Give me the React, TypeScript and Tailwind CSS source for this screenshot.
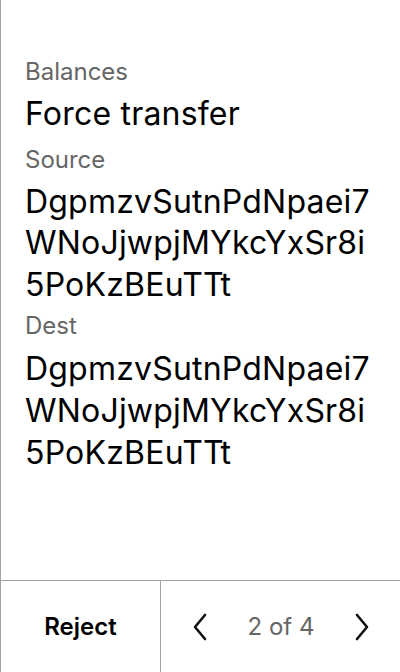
const lines = ["DgpmzvSutnPdNpaei7", "WNoJjwpjMYkcYxSr8i", "5PoKzBEuTTt"];

function Chevron({ dir }: { dir: "left" | "right" }) {
    return (
        <svg width="14" height="28" viewBox="0 0 14 28" fill="none" stroke="#111" strokeWidth="2.6" strokeLinecap="round" strokeLinejoin="round">
            {dir === "left" ? <path d="M12 2 L2 14 L12 26" /> : <path d="M2 2 L12 14 L2 26" />}
        </svg>
    );
}

function Address() {
    return (
        <div className="flex flex-col text-[32px] leading-[41.6px] tracking-[0.2px] text-black">
            {lines.map((l) => (
                <span key={l}>{l}</span>
            ))}
        </div>
    );
}

export default function App() {
    return (
        <div className="flex flex-col h-[672px] w-[400px] bg-white border-l border-[#a3a3a3] font-['Inter',sans-serif]">
            <div className="flex-1 flex flex-col px-6 pt-[56px]">
                <p className="text-[24px] leading-[32px] text-[#666]">Balances</p>
                <h1 className="text-[32px] leading-[41.6px] tracking-[0.2px] mt-[5px] text-black">Force transfer</h1>
                <p className="text-[24px] leading-[32px] text-[#666] mt-[9px]">Source</p>
                <div className="mt-[5px]">
                    <Address />
                </div>
                <p className="text-[24px] leading-[32px] text-[#666] mt-[5px]">Dest</p>
                <div className="mt-[6px]">
                    <Address />
                </div>
            </div>
            <div className="h-[92px] flex flex-row border-t border-[#a3a3a3]">
                <button className="w-[160px] border-r border-[#a3a3a3] text-[24px] font-semibold text-black">Reject</button>
                <div className="flex-1 flex flex-row items-center justify-between pl-[32px] pr-[31px]">
                    <Chevron dir="left" />
                    <span className="text-[24px] text-[#666]">2 of 4</span>
                    <Chevron dir="right" />
                </div>
            </div>
        </div>
    );
}
